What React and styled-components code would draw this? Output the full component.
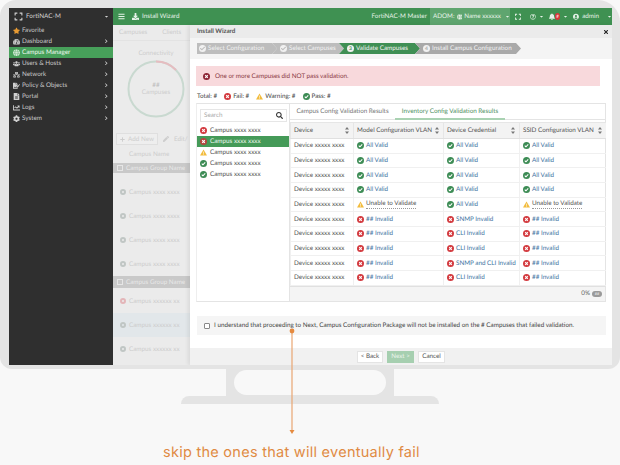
import React from "react";
import styled, { createGlobalStyle } from "styled-components";
import {
  FaStar, FaTachometerAlt, FaUsers, FaPen, FaDownload, FaBars, FaSearch, FaTimes, FaCog, FaFileAlt, FaFileSignature,
  FaChartLine, FaBell, FaUserCircle, FaRegQuestionCircle, FaGlobe, FaExpand, FaChevronRight, FaCaretDown, FaPlus, FaNetworkWired, FaCheck,
} from "react-icons/fa";

const Global = createGlobalStyle`
  html, body { margin: 0; padding: 0; background: #f8f8f8; }
  * { box-sizing: border-box; }
  body { font-family: "Lato", "Open Sans", sans-serif; text-rendering: geometricPrecision; }
`;

const Stage = styled.div`
  position: relative; width: 620px; height: 465px; overflow: hidden;
  background: #f8f8f8; display: flex; flex-direction: column; align-items: center;
`;
const Monitor = styled.div`
  width: 620px; height: 369px; flex: none; background: #e4e4e4;
  border-radius: 16px 22px 12px 12px; padding: 8px 8px 4px 9px;
`;
const Screen = styled.div`
  width: 603px; height: 357px; display: flex; overflow: hidden; background: #fff;
`;
const Sidebar = styled.nav`
  width: 104px; flex: none; background: #2f2f2f; color: #cfcfcf; font-size: 6.3px;
`;
const SideHead = styled.div`
  height: 17px; display: flex; align-items: center; padding: 0 4px 0 5px; gap: 3px; font-size: 6.4px; color: #d4d4d4;
  & > span { flex: 1; }
`;
const SideRow = styled.div`
  height: 11px; display: flex; align-items: center; padding: 0 4px 0 4px; gap: 2px;
  background: ${p => (p.$active ? "#47a05a" : "transparent")};
  color: ${p => (p.$active ? "#eef7ef" : "#c9c9c9")};
  & > span { flex: 1; white-space: nowrap; }
`;
const SideIcon = styled.div`
  width: 7px; display: flex; justify-content: center; color: ${p => p.$color || "#d0d0d0"}; font-size: 7.5px;
`;
const HeadIcon = styled(SideIcon)`width: 9px; font-size: 9px;`;
const Chevron = styled(FaChevronRight)`font-size: 4.5px; color: #cfcfcf; margin-right: 1px;`;

const Main = styled.div`flex: 1; min-width: 0; display: flex; flex-direction: column;`;
const TopBar = styled.header`
  height: 17px; flex: none; background: #3f9152; color: #e6f2e8; font-size: 6.3px;
  display: flex; align-items: center; padding-left: 5px;
`;
const TopTitle = styled.div`
  display: flex; align-items: center; gap: 3px; margin-left: 7px; font-size: 6.3px;
`;
const TopSpacer = styled.div`flex: 1;`;
const Adom = styled.div`
  height: 17px; width: 80px; margin-left: 3px; padding-left: 3px; background: #5fa56f;
  display: flex; align-items: center; gap: 2px; white-space: nowrap;
`;
const TopIcons = styled.div`
  width: 102px; display: flex; align-items: center; padding-left: 5px; gap: 3px; font-size: 7.5px; white-space: nowrap;
`;
const TopName = styled.span`font-size: 6.3px; margin-right: 5px;`;
const Badge = styled.span`
  width: 7px; height: 7px; border-radius: 50%; background: #d8363a; color: #fff; font-size: 4.5px;
  display: inline-flex; align-items: center; justify-content: center; margin-left: -3px;
`;
const Caret = styled(FaCaretDown)`font-size: 5px; flex: none;`;

const Work = styled.div`flex: 1; display: flex; min-height: 0;`;
const BackPane = styled.section`
  width: 77px; flex: none; background: #ebebeb; color: #cdcdcd; font-size: 6.3px; overflow: hidden; white-space: nowrap;
`;
const BackTabs = styled.div`
  height: 16px; display: flex; gap: 15px; align-items: center; padding-left: 6px; border-bottom: 1px solid #e3e3e3;
`;
const Connect = styled.div`
  display: flex; flex-direction: column; align-items: center; width: 86px; padding-top: 9px; font-size: 6.3px;
`;
const Donut = styled.div`
  position: relative; width: 58px; height: 58px; margin-top: 3px; display: flex; flex-direction: column; align-items: center; justify-content: center;
  & svg { position: absolute; inset: 0; }
`;
const BackTools = styled.div`
  display: flex; gap: 5px; align-items: center; margin: 15px 0 0 3px; height: 12px;
`;
const BackBtn = styled.div`
  width: 42px; height: 12px; border: 1px solid #dfdfdf; display: flex; align-items: center; justify-content: center; gap: 3px; background: #eee;
`;
const BackHead = styled.div`height: 18px; padding-left: 16px; display: flex; align-items: center;`;
const GroupRow = styled.div`
  height: ${p => (p.$tall ? 12 : 10)}px; margin-bottom: ${p => (p.$tall ? 1 : 7)}px; background: #c9c9c9; color: #e8e8e8; display: flex; align-items: center; gap: 3px; padding-left: 4px; overflow: hidden;
`;
const Box = styled.i`width: 6px; height: 6px; border: 1px solid #e6e6e6; flex: none;`;
const BackRow = styled.div`
  height: 24px; display: flex; align-items: center; gap: 3px; padding-left: 7px;
  background: ${p => (p.$sel ? "#e2e7ea" : "transparent")};
`;
const Dot = styled.i`
  width: 6px; height: 6px; border-radius: 50%; border: 2px solid ${p => p.$c || "#c0c6c4"}; flex: none;
`;

const Modal = styled.section`
  flex: 1; min-width: 0; background: #fff; display: flex; flex-direction: column; font-size: 6.3px; color: #555;
  box-shadow: -2px 0 4px rgba(0,0,0,.08); z-index: 1;
`;
const ModalTitle = styled.div`
  height: 13px; flex: none; background: #ebebeb; color: #555; font-size: 6.3px; display: flex; align-items: center; justify-content: space-between; padding: 0 3px 0 7px; font-weight: 700;
`;
const Steps = styled.div`
  height: 21px; flex: none; background: #f4f4f4; display: flex; align-items: center; padding-left: 7px;
`;
const Step = styled.div`
  height: 11px; width: ${p => p.$w}px; margin-right: -5px; padding-left: ${p => (p.$first ? 2 : 8)}px;
  background: ${p => p.$bg}; color: #f2f2f2; font-size: 6.3px; display: flex; align-items: center; gap: 2px; white-space: nowrap;
  clip-path: ${p => p.$first
    ? "polygon(0 0, calc(100% - 5px) 0, 100% 50%, calc(100% - 5px) 100%, 0 100%)"
    : "polygon(0 0, calc(100% - 5px) 0, 100% 50%, calc(100% - 5px) 100%, 0 100%, 5px 50%)"};
`;
const StepMark = styled.span`
  width: 7px; height: 7px; border-radius: 50%; background: #f1f1f1; color: ${p => p.$c}; font-size: 5px; display: inline-flex; align-items: center; justify-content: center; flex: none; font-weight: 700;
`;
const Alert = styled.div`
  height: 20px; width: 404px; margin: 7px 0 0 6px; flex: none; background: #f8d9dc; color: #8b3a44; font-size: 6.3px;
  display: flex; align-items: center; padding-left: 7px; gap: 5px;
`;
const Summary = styled.div`
  height: 13px; margin-top: 4px; padding-left: 7px; flex: none; display: flex; align-items: center; gap: 2px; font-size: 6.3px; color: #444;
  & > span { margin-right: 5px; }
`;
const Panels = styled.div`
  height: 199px; width: 410px; margin-left: 6px; flex: none; display: flex; border: 1px solid #e4e4e4; border-left-color: #eee;
`;
const ListPane = styled.div`width: 93px; flex: none; border-right: 1px solid #e4e4e4; display: flex; flex-direction: column;`;
const Search = styled.div`
  height: 13px; margin: 5px 2px 3px 3px; display: flex; align-items: center; justify-content: space-between; border: 1px solid #e6e6e6; padding: 0 3px 0 3px; color: #aaa; font-size: 6.3px;
  & > svg { color: #333; font-size: 7px; }
`;
const ListRow = styled.div`
  height: 11px; display: flex; align-items: center; gap: 3px; padding-left: 3px; white-space: nowrap;
  background: ${p => (p.$sel ? "#459a58" : "transparent")};
  color: ${p => (p.$sel ? "#eaf5ec" : "#555")};
`;
const ResultPane = styled.div`flex: 1; min-width: 0; display: flex; flex-direction: column;`;
const Tabs = styled.div`height: 16px; flex: none; display: flex; border-bottom: 1px solid #e4e4e4; font-size: 6.3px; color: #777;`;
const Tab = styled.div`
  width: ${p => p.$w}px; display: flex; align-items: center; justify-content: center; white-space: nowrap;
  margin-bottom: -1px; color: ${p => (p.$on ? "#4f8f62" : "#777")};
  border-bottom: 2px solid ${p => (p.$on ? "#a9d2b2" : "transparent")};
`;
const Table = styled.table`
  width: 100%; border-collapse: collapse; table-layout: fixed; margin-top: 2px; font-size: 6.3px;
`;
const Th = styled.th`
  height: 16px; padding: 0 0 0 3px; text-align: left; font-weight: 400; background: #f3f3f3; color: #555; border-top: 1px solid #e6e6e6; border-bottom: 1px solid #e0e0e0; border-left: 1px solid #e6e6e6; white-space: nowrap;
  width: ${p => p.$w}px;
`;
const ThInner = styled.div`display: flex; justify-content: space-between; align-items: center; padding-right: 4px;`;
const Td = styled.td`
  height: 14.67px; padding: 0 0 0 3px; border-bottom: 1px solid #f0f0f0; border-left: 1px solid #f0f0f0; white-space: nowrap; color: #555;
`;
const Cell = styled.div`display: flex; align-items: center; gap: 2px; `;
const LinkText = styled.span`color: #42739f;`;
const WarnText = styled.span`color: #555; border-bottom: 1px dotted #999; line-height: 8px;`;
const TableFoot = styled.div`
  flex: 1; background: #f4f4f4; border-top: 1px solid #e0e0e0; display: flex; align-items: center; justify-content: flex-end; gap: 2px; padding-right: 3px; font-size: 6.3px; color: #666;
`;
const Pill = styled.span`
  width: 10px; height: 6px; border-radius: 3px; background: #9a9a9a; color: #eee; font-size: 4px; display: inline-flex; align-items: center; justify-content: center;
`;
const Confirm = styled.div`
  height: 19px; width: 409px; margin: 14px 0 0 7px; flex: none; background: #f5f5f5; display: flex; align-items: center; gap: 4px; padding-left: 7px; font-size: 6.3px; color: #444; white-space: nowrap;
`;
const Check = styled.i`width: 6px; height: 6px; border: 1px solid #888; border-radius: 1px; background: #fff; flex: none;`;
const Footer = styled.div`
  flex: 1; margin-top: 13px; background: #f1f1f1; display: flex; justify-content: center; align-items: center; gap: 4px;
`;
const Btn = styled.div`
  height: 12px; width: ${p => p.$w}px; display: flex; align-items: center; justify-content: center; font-size: 6.3px;
  background: ${p => (p.$primary ? "#a6cfb0" : "#fff")}; color: ${p => (p.$primary ? "#eaf4ec" : "#555")};
  border: 1px solid ${p => (p.$primary ? "#a6cfb0" : "#e4e4e4")};
`;

const Neck = styled.div`
  width: 168px; height: 27px; flex: none; background: #e4e4e4; padding: 1px 8px 1px 8px;
  &::before { content: ""; display: block; height: 100%; border-radius: 13px; background: #f8f8f8; }
`;
const Base = styled.div`
  width: 258px; height: 8px; flex: none; background: #e4e4e4; border-radius: 8px 8px 0 0;
`;
const Caption = styled.div`
  margin-top: 40px; width: 100%; padding-left: 163px; font-family: "Inter", "Lato", sans-serif; font-size: 14.5px; color: #e08a43; letter-spacing: .27px; white-space: nowrap; line-height: 18px; font-weight: 400;
`;
const ArrowOver = styled.svg`position: absolute; left: 286px; top: 326px; z-index: 5;`;

const Pass = ({ s = 7 }) => (
  <svg width={s} height={s} viewBox="0 0 16 16" style={{ flex: "none" }}>
    <circle cx="8" cy="8" r="8" fill="#3d8c55" />
    <path d="M4 8.3l2.8 2.8L12 5.6" fill="none" stroke="#fff" strokeWidth="2.4" />
  </svg>
);
const Fail = ({ s = 7, c = "#d33a3f" }) => (
  <svg width={s} height={s} viewBox="0 0 16 16" style={{ flex: "none" }}>
    <circle cx="8" cy="8" r="8" fill={c} />
    <path d="M5 5l6 6M11 5l-6 6" fill="none" stroke="#fff" strokeWidth="2.6" />
  </svg>
);
const Warn = ({ s = 7 }) => (
  <svg width={s} height={s} viewBox="0 0 16 16" style={{ flex: "none" }}>
    <path d="M8 1l8 14H0z" fill="#f2bc3e" />
    <path d="M8 6v5M8 12.2v1.6" stroke="#fff" strokeWidth="1.4" />
  </svg>
);
const Sort = () => (
  <svg width="4" height="7" viewBox="0 0 8 14"><path d="M4 0l4 5H0zM4 14l4-5H0z" fill="#777" /></svg>
);

const Status = ({ kind }) => (kind === "p" ? <Pass /> : kind === "w" ? <Warn /> : <Fail />);
const Value = ({ v }) => {
  const kind = v === "All Valid" ? "p" : v.startsWith("Unable") ? "w" : "f";
  return (
    <Cell>
      <Status kind={kind} />
      {kind === "w" ? <WarnText>{v}</WarnText> : <LinkText>{v}</LinkText>}
    </Cell>
  );
};

const nav = [
  ["Favorite", FaStar, false, "#e89a32"],
  ["Dashboard", FaTachometerAlt, true],
  ["Campus Manager", FaGlobe, false, null, true],
  ["Users & Hosts", FaUsers, true],
  ["Network", FaNetworkWired, true],
  ["Policy & Objects", FaFileSignature, true],
  ["Portal", FaFileAlt, true],
  ["Logs", FaChartLine, true],
  ["System", FaCog, true],
];
const V = "All Valid", I = "## Invalid", U = "Unable to Validate";
const rows = [
  [V, V, V], [V, V, V], [V, V, V], [V, V, V], [U, V, U],
  [I, "SNMP Invalid", I], [I, "CLI Invalid", I], [I, "CLI Invalid", I],
  [I, "SNMP and CLI Invalid", I], [I, "CLI Invalid", I],
];
const heads = [["Device", 63], ["Model Configuration VLAN", 90], ["Device Credential", 76], ["SSID Configuration VLAN", 86]];

export default function App() {
  return (
    <Stage>
      <Global />
      <Monitor>
        <Screen>
          <Sidebar>
            <SideHead>
              <HeadIcon><FaExpand /></HeadIcon>
              <span>FortiNAC-M</span>
              <Caret />
            </SideHead>
            {nav.map(([label, Icon, more, color, active]) => (
              <SideRow key={label} $active={active}>
                <SideIcon $color={active ? "#cfe8d4" : color}><Icon /></SideIcon>
                <span>{label}</span>
                {more && <Chevron />}
              </SideRow>
            ))}
          </Sidebar>
          <Main>
            <TopBar>
              <FaBars style={{ fontSize: 7 }} />
              <TopTitle><FaDownload style={{ fontSize: 7 }} />Install Wizard</TopTitle>
              <TopSpacer />
              <span>FortiNAC-M Master</span>
              <Adom>ADOM: <FaGlobe style={{ fontSize: 6 }} /> Name xxxxxx <Caret style={{ marginLeft: 2 }} /></Adom>
              <TopIcons>
                <FaExpand style={{ marginRight: 6 }} />
                <FaRegQuestionCircle /><Caret style={{ marginRight: 2 }} />
                <FaBell /><Badge>#</Badge><Caret style={{ marginRight: 2 }} />
                <FaUserCircle /><TopName>admin</TopName><Caret />
              </TopIcons>
            </TopBar>
            <Work>
              <BackPane>
                <BackTabs><span>Campuses</span><span>Clients</span></BackTabs>
                <Connect>
                  Connectivity
                  <Donut>
                    <svg width="58" height="58" viewBox="0 0 58 58">
                      <circle cx="29" cy="29" r="27.5" fill="none" stroke="#c9d9d0" strokeWidth="2" />
                      <path d="M29 1.5A27.5 27.5 0 0 1 49 10" fill="none" stroke="#e6bcc0" strokeWidth="2" />
                    </svg>
                    <b style={{ fontWeight: 400, color: "#bbb" }}>##</b>
                    <span>Campuses</span>
                  </Donut>
                </Connect>
                <BackTools>
                  <BackBtn><FaPlus style={{ fontSize: 5 }} />Add New</BackBtn>
                  <FaPen style={{ fontSize: 6 }} /><span>Edit/</span>
                </BackTools>
                <BackHead>Campus Name</BackHead>
                <GroupRow><Box />Campus Group Name</GroupRow>
                {["xxxx xxxx", "xxxx xxxx", "xxxx xxxx", "xxxx xxxx"].map((t, i) => (
                  <BackRow key={i}><Dot />Campus {t}</BackRow>
                ))}
                <GroupRow $tall><Box />Campus Group Name</GroupRow>
                <BackRow><Dot $c="#e3b5b8" />Campus xxxxxx xx</BackRow>
                <BackRow $sel><Dot />Campus xxxxxx xx</BackRow>
                <BackRow><Dot />Campus xxxxxx xx</BackRow>
              </BackPane>
              <Modal>
                <ModalTitle>Install Wizard<FaTimes style={{ fontSize: 6, color: "#222" }} /></ModalTitle>
                <Steps>
                  <Step $first $w={80} $bg="#bdbdbd"><StepMark $c="#bdbdbd"><FaCheck /></StepMark>Select Configuration</Step>
                  <Step $w={72} $bg="#bdbdbd"><StepMark $c="#bdbdbd"><FaCheck /></StepMark>Select Campuses</Step>
                  <Step $w={81} $bg="#3f8f54"><StepMark $c="#3f8f54">3</StepMark>Validate Campuses</Step>
                  <Step $w={106} $bg="#a9a9a9"><StepMark $c="#a9a9a9">4</StepMark>Install Campus Configuration</Step>
                </Steps>
                <Alert><Fail s={7} c="#8e2636" />One or more Campuses did NOT pass validation.</Alert>
                <Summary>
                  <span>Total: #</span>
                  <Fail /><span>Fail: #</span>
                  <Warn /><span>Warning: #</span>
                  <Pass /><span>Pass: #</span>
                </Summary>
                <Panels>
                  <ListPane>
                    <Search>Search<FaSearch /></Search>
                    <ListRow><Fail />Campus xxxx xxxx</ListRow>
                    <ListRow $sel><Fail c="#b5453f" />Campus xxxx xxxx</ListRow>
                    <ListRow><Warn />Campus xxxx xxxx</ListRow>
                    <ListRow><Pass />Campus xxxx xxxx</ListRow>
                    <ListRow><Pass />Campus xxxx xxxx</ListRow>
                  </ListPane>
                  <ResultPane>
                    <Tabs>
                      <Tab $w={105}>Campus Config Validation Results</Tab>
                      <Tab $w={110} $on>Inventory Config Validation Results</Tab>
                    </Tabs>
                    <Table>
                      <thead>
                        <tr>
                          {heads.map(([h, w]) => (
                            <Th key={h} $w={w}><ThInner>{h}<Sort /></ThInner></Th>
                          ))}
                        </tr>
                      </thead>
                      <tbody>
                        {rows.map((r, i) => (
                          <tr key={i}>
                            <Td>Device xxxxx xxxx</Td>
                            {r.map((v, j) => <Td key={j}><Value v={v} /></Td>)}
                          </tr>
                        ))}
                      </tbody>
                    </Table>
                    <TableFoot>0% <Pill>##</Pill></TableFoot>
                  </ResultPane>
                </Panels>
                <Confirm><Check />I understand that proceeding to Next, Campus Configuration Package will not be installed on the # Campuses that failed validation.</Confirm>
                <Footer>
                  <Btn $w={26}>&lt; Back</Btn>
                  <Btn $w={27} $primary>Next &gt;</Btn>
                  <Btn $w={27}>Cancel</Btn>
                </Footer>
              </Modal>
            </Work>
          </Main>
        </Screen>
      </Monitor>
      <Neck />
      <Base />
      <Caption>skip the ones that will eventually fail</Caption>
      <ArrowOver width="12" height="112" viewBox="0 0 12 112">
        <line x1="6" y1="5" x2="6" y2="104" stroke="#eaa672" strokeWidth="1.2" />
        <circle cx="6" cy="5" r="2.4" fill="#e58a3f" />
        <path d="M3.5 104h5L6 108z" fill="#e58a3f" />
      </ArrowOver>
    </Stage>
  );
}
